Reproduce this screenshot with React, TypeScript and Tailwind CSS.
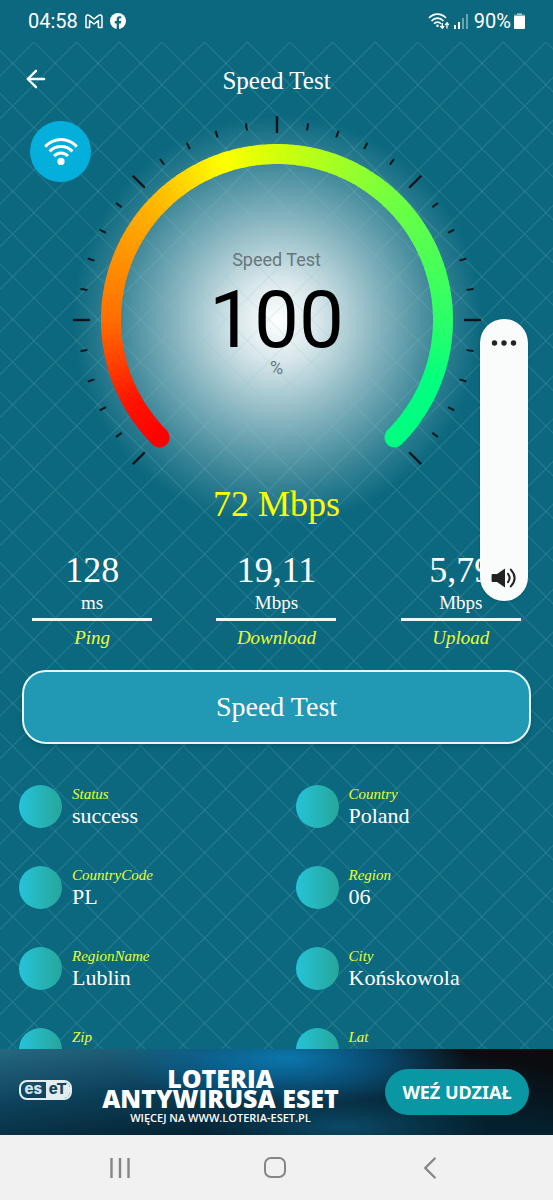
import { ArrowLeft, ChevronLeft } from 'lucide-react'

const stats = [
  { value: '128', unit: 'ms', label: 'Ping' },
  { value: '19,11', unit: 'Mbps', label: 'Download' },
  { value: '5,79', unit: 'Mbps', label: 'Upload' },
]

const details = [
  { label: 'Status', value: 'success' },
  { label: 'Country', value: 'Poland' },
  { label: 'CountryCode', value: 'PL' },
  { label: 'Region', value: '06' },
  { label: 'RegionName', value: 'Lublin' },
  { label: 'City', value: 'Końskowola' },
  { label: 'Zip', value: '' },
  { label: 'Lat', value: '' },
]

// [degrees along the arc, r, g, b]
const stops = [
  [0, 255, 0, 0],
  [16, 255, 20, 0],
  [45, 255, 110, 0],
  [90, 255, 185, 0],
  [116, 255, 255, 0],
  [135, 210, 255, 10],
  [180, 110, 255, 66],
  [225, 44, 255, 104],
  [248, 0, 255, 128],
  [270, 0, 255, 128],
]

function colorAt(deg: number) {
  const i = Math.max(1, stops.findIndex((s) => s[0] >= deg))
  const a = stops[i - 1]
  const b = stops[i]
  const k = (deg - a[0]) / (b[0] - a[0])
  const mix = [1, 2, 3].map((n) => Math.round(a[n] + (b[n] - a[n]) * k))
  return `rgb(${mix.join(',')})`
}

// 0deg is the lower left end of the gauge, going clockwise
function point(deg: number, r: number) {
  const rad = ((deg + 135) * Math.PI) / 180
  return [208 + r * Math.cos(rad), 208 + r * Math.sin(rad)]
}

function Gauge() {
  const segments = Array.from({ length: 135 }, (_, i) => i * 2)
  const ticks = Array.from({ length: 31 }, (_, i) => i * 9)
  const [sx, sy] = point(0, 166)
  const [ex, ey] = point(270, 166)
  return (
    <svg viewBox="0 0 416 368" className="w-[416px] h-[368px] overflow-visible" aria-hidden="true">
      {ticks.map((deg) => {
        const long = deg % 45 === 0
        const [x1, y1] = point(deg, long ? 187 : 192)
        const [x2, y2] = point(deg, long ? 204 : 199)
        return <line key={deg} x1={x1} y1={y1} x2={x2} y2={y2} stroke="#0b1418" strokeWidth={long ? 2.4 : 2} />
      })}
      <circle cx={sx} cy={sy} r="10" fill="#ff0000" />
      <circle cx={ex} cy={ey} r="10" fill="#00ff80" />
      {segments.map((deg) => {
        const [x1, y1] = point(deg, 166)
        const [x2, y2] = point(Math.min(deg + 2.4, 270), 166)
        return (
          <path
            key={deg}
            d={`M${x1} ${y1}A166 166 0 0 1 ${x2} ${y2}`}
            fill="none"
            stroke={colorAt(deg + 1)}
            strokeWidth="20"
          />
        )
      })}
    </svg>
  )
}

function Glow() {
  return (
    <svg viewBox="0 0 416 416" className="absolute top-[70px] left-1/2 -translate-x-1/2 w-[416px] h-[416px]" aria-hidden="true">
      <defs>
        <radialGradient id="glow">
          <stop offset="0" stopColor="#fff" />
          <stop offset="0.2" stopColor="#fff" stopOpacity="0.84" />
          <stop offset="0.5" stopColor="#fff" stopOpacity="0.5" />
          <stop offset="0.8" stopColor="#fff" stopOpacity="0.18" />
          <stop offset="1" stopColor="#fff" stopOpacity="0" />
        </radialGradient>
      </defs>
      <circle cx="208" cy="208" r="205" fill="url(#glow)" />
    </svg>
  )
}

function Lattice() {
  // three diamonds to a 128px tile, so the tile edges stay on whole pixels
  const steps = [-3, -2, -1, 0, 1, 2, 3].map((n) => (n * 128) / 3)
  return (
    <svg className="absolute inset-0 w-full h-full" aria-hidden="true">
      <defs>
        <pattern id="lattice" x="34" y="0" width="128" height="128" patternUnits="userSpaceOnUse">
          {steps.map((x) => (
            <path
              key={x}
              d={`M${x - 2} -2l132 132M${x + 130} -2l-132 132`}
              fill="none"
              stroke="#7fc4cf"
              strokeOpacity="0.18"
              strokeWidth="1.2"
            />
          ))}
        </pattern>
      </defs>
      <rect width="100%" height="100%" fill="url(#lattice)" />
    </svg>
  )
}

function StatusBar() {
  return (
    <div className="h-[42px] shrink-0 flex items-center pl-7 pr-7 text-white font-['Roboto',sans-serif] text-xl leading-6">
      <span>04:58</span>
      <svg viewBox="0 0 18 15" className="w-[18px] h-[15px] ml-[7px]" fill="none" stroke="#fff" strokeWidth="1.5" strokeLinejoin="round">
        <path d="M1 2.8V13.4H4.6V6.6L9 10L13.4 6.6V13.4H17V2.8C17 1 15 .4 13.7 1.4L9 5L4.3 1.4C3 .4 1 1 1 2.8Z" />
      </svg>
      <svg viewBox="0 0 16 16" className="w-4 h-4 ml-[7px]">
        <circle cx="8" cy="8" r="8" fill="#fff" />
        <path d="M6.7 16V10.4H4.8V8.1H6.7V6.4C6.7 4.4 7.9 3.2 9.7 3.2C10.5 3.2 11.3 3.4 11.3 3.4V5.3H10.3C9.3 5.3 9 5.9 9 6.5V8.1H11.2L10.8 10.4H9V16Z" fill="#0b687e" />
      </svg>
      <svg viewBox="0 0 22 17" className="w-[22px] h-[17px] ml-auto" fill="none" stroke="#fff" strokeWidth="1.7">
        <path d="M1 5C5.8 -.2 13.2 -.2 18 5" />
        <path d="M3.5 8C7 4.2 12 4.2 15.5 8" />
        <path d="M6 10.8C8 8.6 11 8.6 13 10.8" />
        <circle cx="9.5" cy="12.7" r="1.3" fill="#fff" stroke="none" />
        <path d="M14.3 10V15M12.4 13L14.3 15.2L16.2 13M19 15.5V10M17.2 12L19 9.8L20.8 12" strokeWidth="1.3" />
      </svg>
      <svg viewBox="0 0 16 16" className="w-4 h-4 ml-1" fill="#fff">
        <rect x="0" y="12" width="2" height="4" />
        <rect x="4" y="9" width="2" height="7" />
        <rect x="8" y="5" width="2" height="11" opacity=".4" />
        <rect x="12" y="1" width="2" height="15" opacity=".4" />
      </svg>
      <span className="ml-1">90%</span>
      <svg viewBox="0 0 11 16" className="w-[11px] h-4 ml-[3px]" fill="#fff">
        <rect x="3" y="0" width="5" height="2" opacity=".45" />
        <rect x="0" y="1.6" width="11" height="1.4" opacity=".5" />
        <rect x="0" y="3" width="11" height="13" rx="1" />
      </svg>
    </div>
  )
}

function VolumePanel() {
  return (
    <div className="absolute right-[25px] top-[319px] w-12 h-[282px] rounded-full bg-[#fafcfc] shadow-sm flex flex-col items-center pt-5 pb-3">
      <button type="button" aria-label="Sound settings">
        <svg viewBox="0 0 26 8" className="w-[26px] h-2" fill="#222">
          <circle cx="3.5" cy="4" r="2.7" />
          <circle cx="13" cy="4" r="2.7" />
          <circle cx="22.5" cy="4" r="2.7" />
        </svg>
      </button>
      <input
        type="range"
        aria-label="Volume"
        defaultValue={100}
        className="flex-1 min-h-0 w-8 appearance-none bg-transparent [writing-mode:vertical-lr] [direction:rtl] [&::-webkit-slider-thumb]:appearance-none"
      />
      <svg viewBox="0 0 26 22" className="w-[26px] h-[22px]" aria-hidden="true">
        <path d="M1.5 7H6L14 1.4V20.6L6 15H1.5Q.6 15 .6 14V8Q.6 7 1.5 7Z" fill="#222" />
        <path d="M17 6.8Q20.2 11 17 15.2M19.8 2.6Q27.4 11 19.8 19.4" fill="none" stroke="#222" strokeWidth="2" strokeLinecap="round" />
      </svg>
    </div>
  )
}

function EsetLogo() {
  return (
    <div className="mb-1 flex h-5 w-[53px] shrink-0 overflow-hidden rounded-lg border-2 border-[#e3edf0] font-['Inter',sans-serif] text-[15px] leading-[14px] font-extrabold">
      <span className="flex-1 text-center text-[#d5e2e7]">es</span>
      <span className="flex-1 bg-[#e3edf0] text-center text-[#17455a]">eT</span>
    </div>
  )
}

function AdBanner() {
  return (
    <div className="h-[86px] shrink-0 flex items-center pl-[19px] pr-6 text-white bg-[radial-gradient(ellipse_at_52%_10%,#0a86c4cc_0%,#0768a088_24%,transparent_44%),linear-gradient(12deg,transparent_60%,#0a0c0f_90%),radial-gradient(ellipse_at_62%_90%,#0a4a66_0%,transparent_30%),linear-gradient(172deg,#26687f_0%,#0d425c_34%,#04202f_72%,#04202c_100%)]">
      <EsetLogo />
      <div className="flex-1 min-w-0 flex flex-col items-center pt-3 pr-4 font-['Open_Sans',sans-serif] whitespace-nowrap">
        <span className="text-[25px] leading-5 font-extrabold">LOTERIA</span>
        <span className="text-[25px] leading-5 font-extrabold">ANTYWIRUSA ESET</span>
        <span className="text-[11px] leading-5 font-semibold">WIĘCEJ NA WWW.LOTERIA-ESET.PL</span>
      </div>
      <button type="button" className="w-36 h-[46px] shrink-0 rounded-full bg-[#0997a3] font-['Noto_Sans',sans-serif] text-lg font-bold whitespace-nowrap">
        WEŹ UDZIAŁ
      </button>
    </div>
  )
}

function NavBar() {
  return (
    <nav className="h-[65px] shrink-0 bg-[#f1f1f1] flex items-center justify-center pr-1 text-[#858585]">
      <button type="button" aria-label="Recent apps" className="w-[155px] flex justify-center">
        <svg viewBox="0 0 20 20" className="w-5 h-5" stroke="currentColor" strokeWidth="2.4">
          <path d="M1.5 0V20M10 0V20M18.5 0V20" />
        </svg>
      </button>
      <button type="button" aria-label="Home" className="w-[155px] flex justify-center">
        <span className="w-[22px] h-[21px] rounded-[7px] border-2 border-current" />
      </button>
      <button type="button" aria-label="Back" className="w-[155px] flex justify-center">
        <ChevronLeft size={38} strokeWidth={1.5} />
      </button>
    </nav>
  )
}

export default function App() {
  return (
    <div className="relative h-screen flex flex-col overflow-hidden bg-[#0b687e] font-['Liberation_Serif',serif] text-white">
      <StatusBar />

      <main className="relative flex-1 min-h-0 overflow-hidden">
        <Glow />
        <Lattice />

        <div className="relative">
          <header className="h-[70px] grid grid-cols-[1fr_auto_1fr] items-center px-[22px] pt-1">
            <button type="button" aria-label="Back" className="w-7">
              <ArrowLeft size={28} strokeWidth={2} />
            </button>
            <h1 className="pt-1 text-[25px]">Speed Test</h1>
          </header>

          <section className="grid">
            <div className="col-start-1 row-start-1 justify-self-center grid">
              <div className="col-start-1 row-start-1">
                <Gauge />
              </div>
              <div className="col-start-1 row-start-1 pt-[136px] flex flex-col items-center font-['Roboto',sans-serif] text-lg leading-6 text-[#66777b]">
                <span>Speed Test</span>
                <span className="pt-3 text-[80px] leading-[72px] text-black">100</span>
                <span>%</span>
              </div>
            </div>
            <button
              type="button"
              aria-label="Wi-Fi"
              className="col-start-1 row-start-1 mt-[9px] ml-[30px] w-[61px] h-[61px] rounded-full bg-[#04afdc] flex items-center justify-center"
            >
              <svg viewBox="0 0 34 28" className="w-[34px] h-7" fill="none" stroke="#fff" strokeWidth="3">
                <path d="M1.2 8.6C10 -.8 24 -.8 32.8 8.6" />
                <path d="M5.6 13.4C12 6.8 22 6.8 28.4 13.4" />
                <path d="M10 18C14 13.9 20 13.9 24 18" />
                <circle cx="17" cy="23.4" r="3.6" fill="#fff" stroke="none" />
              </svg>
            </button>
          </section>

          <p className="text-center text-4xl leading-[48px] text-[#ffff00]">72 Mbps</p>

          <section className="mt-[19px] grid grid-cols-3">
            {stats.map(({ value, unit, label }) => (
              <div key={label} className="flex flex-col items-center">
                <span className="text-4xl leading-[46px]">{value}</span>
                <span className="text-[19px] leading-5">{unit}</span>
                <span className="mt-[5px] w-[120px] h-[3px] bg-[#eef8fa]" />
                <span className="mt-[7px] text-[19px] leading-5 italic text-[#e9ff2e]">{label}</span>
              </div>
            ))}
          </section>

          <div className="mt-[22px] px-[22px]">
            <button type="button" className="w-full h-[74px] rounded-3xl border-2 border-[#e6f6fa] bg-[#2199b5] text-[28px] shadow-md">
              Speed Test
            </button>
          </div>

          <dl className="mt-10 grid grid-cols-2 gap-y-[37px]">
            {details.map(({ label, value }) => (
              <div key={label} className="flex items-center gap-[10px] pl-[19px]">
                <span className="w-[43px] h-[43px] rounded-full bg-linear-to-r from-[#26c3da] to-[#26a69a]" />
                <div className="h-11">
                  <dt className="text-[15px] leading-5 italic text-[#e9ff2e]">{label}</dt>
                  <dd className="text-[22px] leading-6">{value}</dd>
                </div>
              </div>
            ))}
          </dl>
        </div>
      </main>

      <AdBanner />
      <NavBar />
      <VolumePanel />
    </div>
  )
}
